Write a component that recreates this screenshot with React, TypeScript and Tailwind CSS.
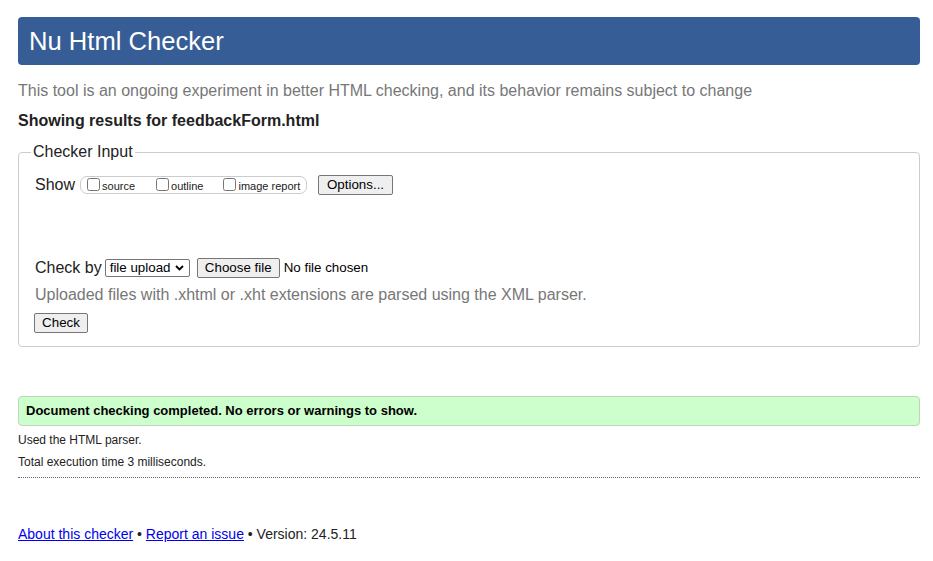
import React from 'react';

const btn =
  'h-[20px] px-[6px] bg-[#efefef] border border-[#767676] rounded-[2px] text-[13.33px] leading-[16px] text-black';

const Checkbox = ({ label, gap }: { label: string; gap: string }) => (
  <label className={`flex items-end ${gap}`}>
    <input type="checkbox" className="w-[13px] h-[13px] m-0 mb-[2px]" />
    <span className="ml-[2px] text-[11px] leading-[13px] text-[#222]">{label}</span>
  </label>
);

const App: React.FC = () => {
  return (
    <div className="min-h-[561px] bg-white pl-[18px] pr-[13px] pt-[17px] pb-[20px] text-[#222]" style={{ fontFamily: '"Liberation Sans", Arial, sans-serif' }}>
      {/* Header */}
      <div className="h-[48px] bg-[#365d95] rounded-[4px] flex items-center px-[11px]">
        <h1 className="text-white text-[25.6px] leading-[30px]">Nu Html Checker</h1>
      </div>

      <p className="mt-[17px] text-[16px] leading-[18px] text-[#777]">
        This tool is an ongoing experiment in better HTML checking, and its behavior remains subject to change
      </p>
      <p className="mt-[12px] text-[16px] leading-[18px] font-bold text-[#222]">Showing results for feedbackForm.html</p>

      {/* Checker input */}
      <fieldset className="mt-[13px] border border-[#ccc] rounded-[4px] px-[16px] pb-[12px]">
        <legend className="-ml-[4px] px-[2px] text-[16px] leading-[18px] text-[#222]">Checker Input</legend>

        <div className="mt-[14px] flex items-center h-[20px]">
          <span className="text-[16px] leading-[18px]">Show</span>
          <div className="ml-[5px] h-[18px] w-[227px] border border-[#ccc] rounded-[7px] flex items-center pl-[6px]">
            <Checkbox label="source" gap="" />
            <Checkbox label="outline" gap="ml-[21px]" />
            <Checkbox label="image report" gap="ml-[20px]" />
          </div>
          <button className={`${btn} ml-[11px] w-[75px]`}>Options...</button>
        </div>

        <div className="mt-[63px] flex items-center h-[20px]">
          <span className="text-[16px] leading-[18px]">Check by</span>
          <div className="ml-[3px] h-[18px] w-[85px] border border-[#767676] rounded-[2px] flex items-center justify-between pl-[4px] pr-[5px] text-[13.33px] leading-[16px] text-black">
            <span>file upload</span>
            <svg width="9" height="6" viewBox="0 0 9 6" fill="none" stroke="#000" strokeWidth="1.8">
              <path d="M1 1l3.5 3.5L8 1" />
            </svg>
          </div>
          <button className={`${btn} ml-[7px] w-[83px]`}>Choose file</button>
          <span className="ml-[4px] text-[13.33px] leading-[16px] text-black">No file chosen</span>
        </div>

        <p className="mt-[8px] text-[16px] leading-[18px] text-[#777]">
          Uploaded files with .xhtml or .xht extensions are parsed using the XML parser.
        </p>
        <button className={`${btn} mt-[9px] -ml-[1px] w-[54px]`}>Check</button>
      </fieldset>

      {/* Result */}
      <div className="mt-[49px] h-[30px] bg-[#ccffcc] border border-[#bcd6bc] rounded-[4px] flex items-center px-[7px]">
        <span className="text-[13px] leading-[16px] font-bold text-black">
          Document checking completed. No errors or warnings to show.
        </span>
      </div>
      <p className="mt-[7px] text-[12px] leading-[14px] text-[#222]">Used the HTML parser.</p>
      <p className="mt-[8px] text-[12px] leading-[14px] text-[#222]">Total execution time 3 milliseconds.</p>
      <div className="mt-[8px] border-b border-dotted border-[#666]" />

      {/* Footer */}
      <p className="mt-[48px] text-[14px] leading-[16px] text-[#222]">
        <a href="#" className="text-[#0000ee] underline">About this checker</a>
        {' • '}
        <a href="#" className="text-[#0000ee] underline">Report an issue</a>
        {' • Version: 24.5.11'}
      </p>
    </div>
  );
};

export default App;
